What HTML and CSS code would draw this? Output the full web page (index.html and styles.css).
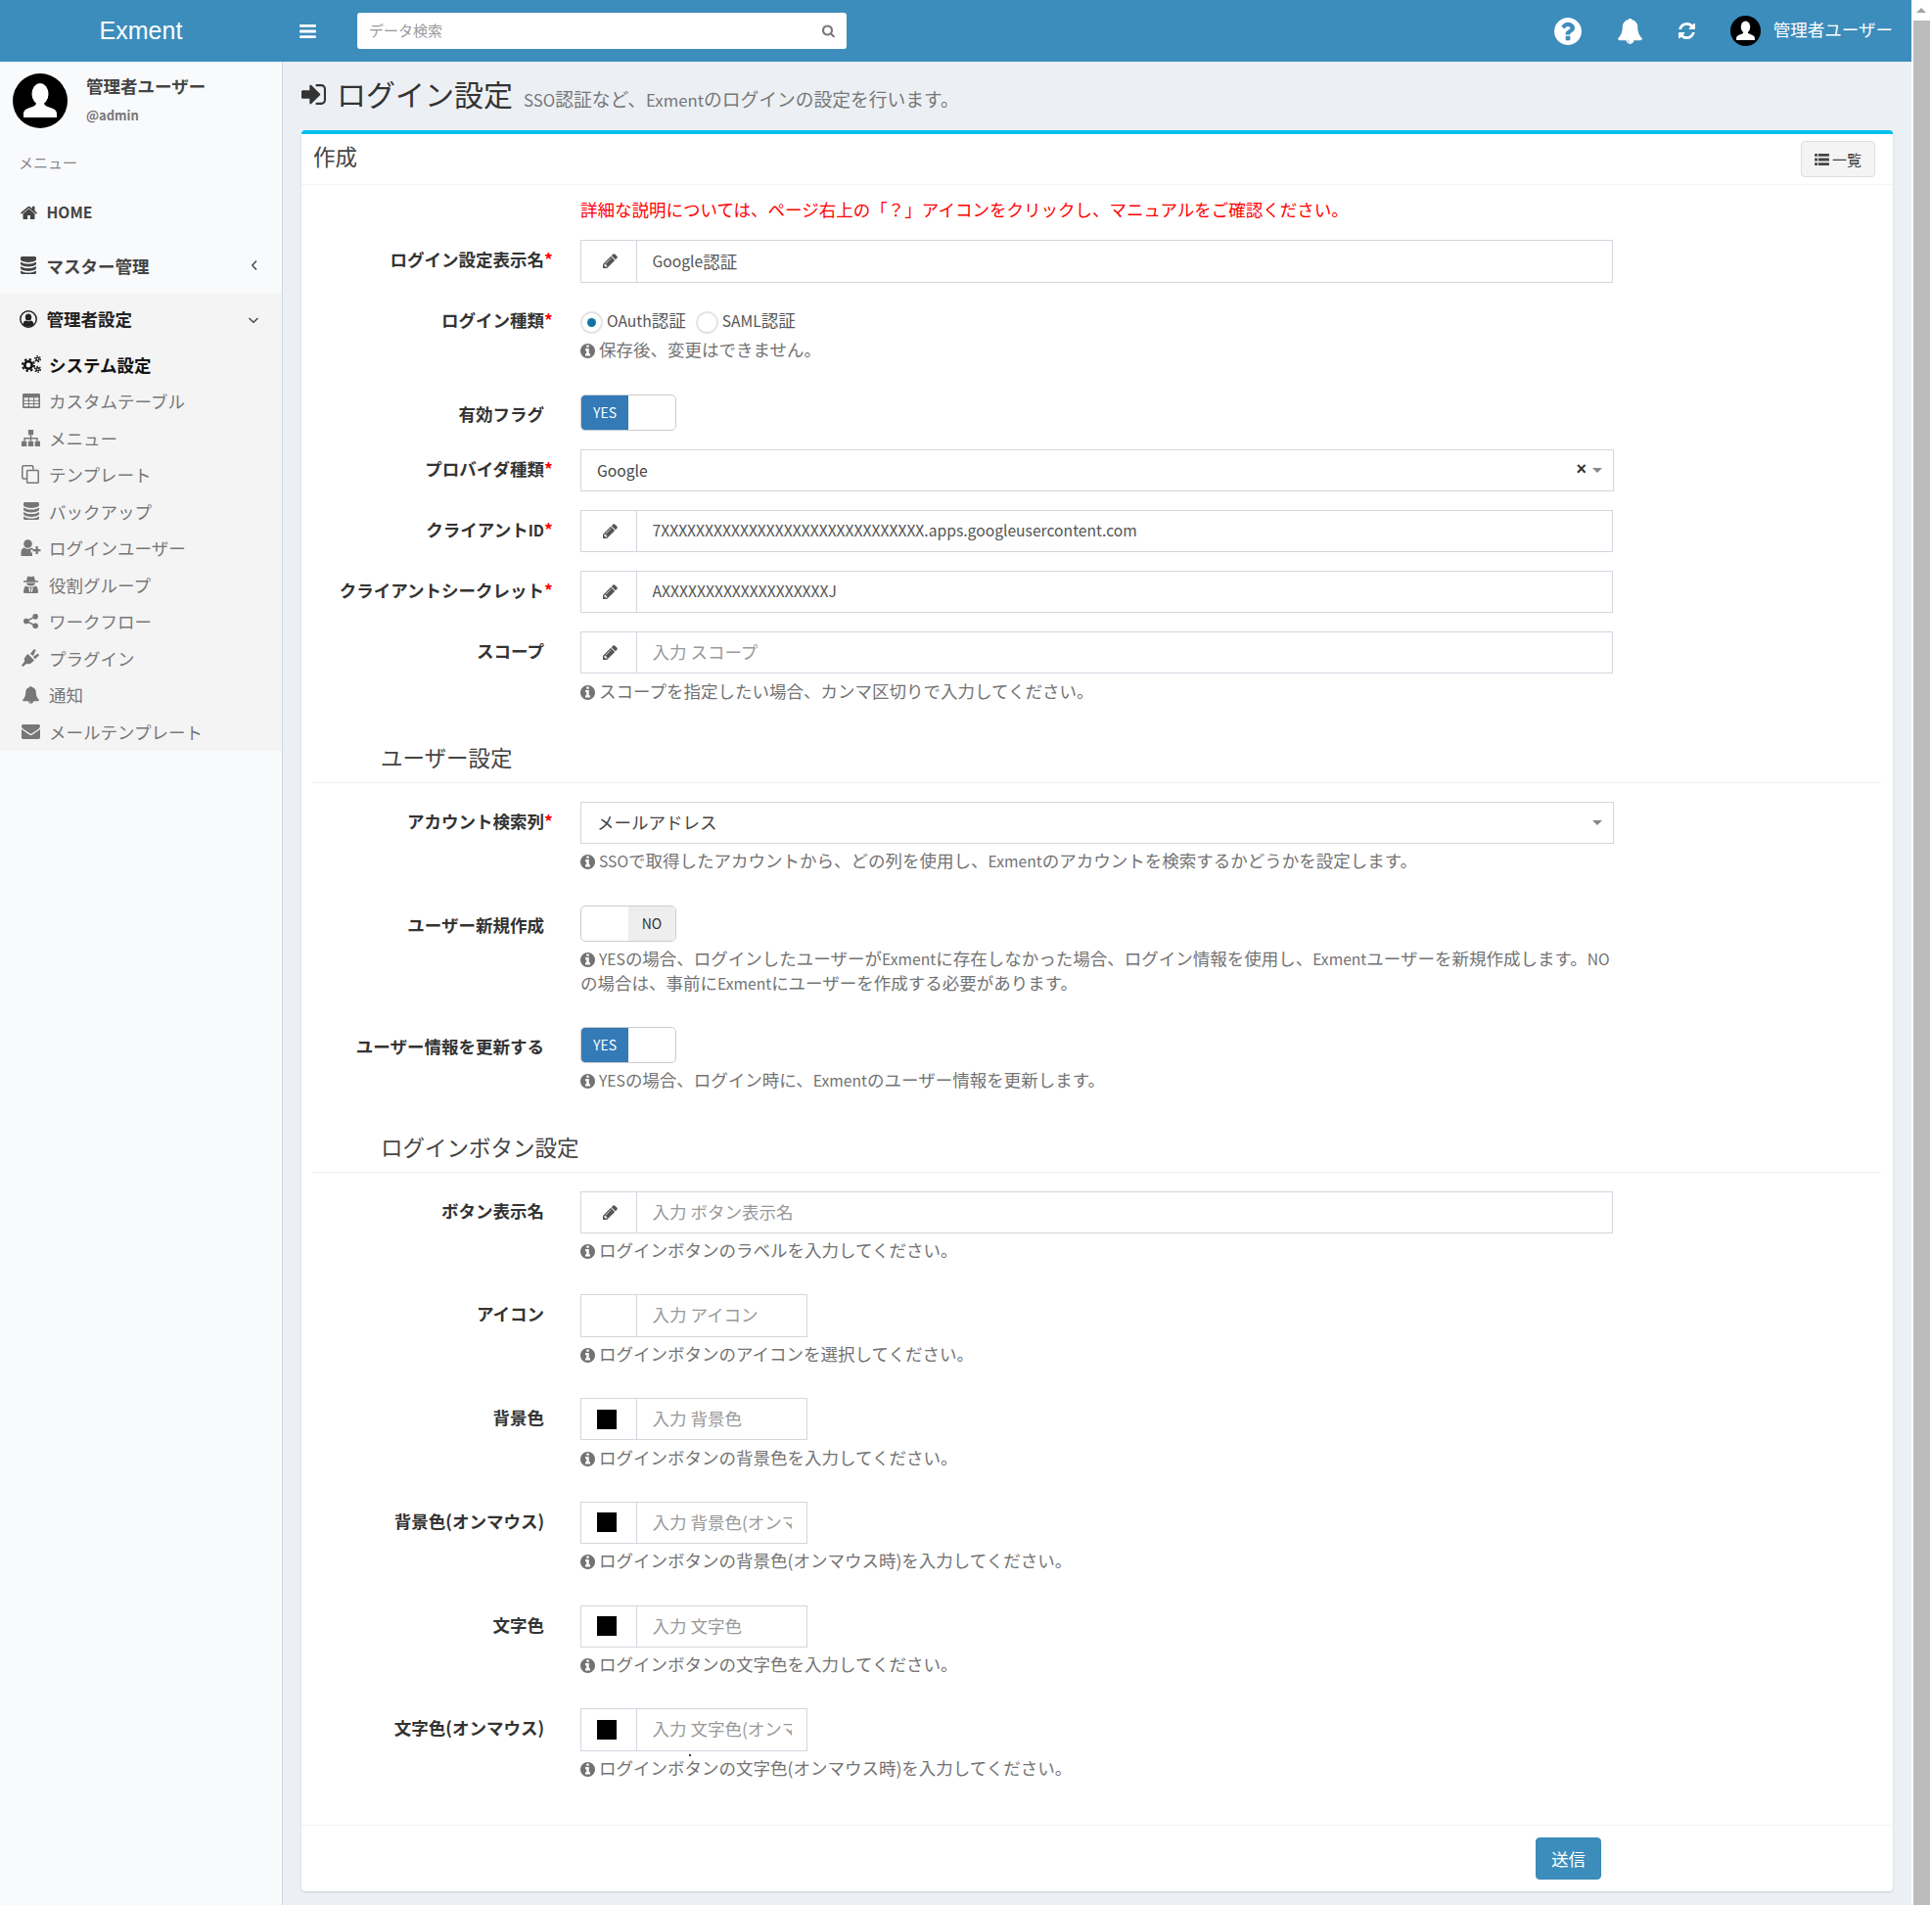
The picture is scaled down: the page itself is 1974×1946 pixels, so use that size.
FILE: index.html
```html
<!DOCTYPE html>
<html lang="ja">
<head>
    <meta charset="UTF-8">
    <title>ログイン設定</title>
    <link rel="stylesheet" href="styles.css">
</head>
<body>
<svg class="defs" width="0" height="0">
    <symbol id="i-bars" viewBox="128 256 1536 1280"><path d="M1664 1344v128q0 26-19 45t-45 19h-1408q-26 0-45-19t-19-45v-128q0-26 19-45t45-19h1408q26 0 45 19t19 45zm0-512v128q0 26-19 45t-45 19h-1408q-26 0-45-19t-19-45v-128q0-26 19-45t45-19h1408q26 0 45 19t19 45zm0-512v128q0 26-19 45t-45 19h-1408q-26 0-45-19t-19-45v-128q0-26 19-45t45-19h1408q26 0 45 19t19 45z"/></symbol>
    <symbol id="i-search" viewBox="64 64 1664 1664"><path d="M1216 832q0-185-131.5-316.5t-316.5-131.5-316.5 131.5-131.5 316.5 131.5 316.5 316.5 131.5 316.5-131.5 131.5-316.5zm512 832q0 52-38 90t-90 38q-54 0-90-38l-343-342q-179 124-399 124-143 0-273.5-55.5t-225-150-150-225-55.5-273.5 55.5-273.5 150-225 225-150 273.5-55.5 273.5 55.5 225 150 150 225 55.5 273.5q0 220-124 399l343 343q37 37 37 90z"/></symbol>
    <symbol id="i-question" viewBox="128 128 1536 1536"><path d="M1024 1376v-192q0-14-9-23t-23-9h-192q-14 0-23 9t-9 23v192q0 14 9 23t23 9h192q14 0 23-9t9-23zm256-672q0-88-55.5-163t-138.5-116-170-41q-243 0-371 213-15 24 8 42l132 100q7 6 19 6 16 0 25-12 53-68 86-92 34-24 86-24 48 0 85.5 26t37.5 59q0 38-20 61t-68 45q-63 28-115.5 86.5t-52.5 125.5v36q0 14 9 23t23 9h192q14 0 23-9t9-23q0-19 21.5-49.5t54.5-49.5q32-18 49-28.5t46-35 44.5-48 28-60.5 12.5-81zm384 192q0 209-103 385.5t-279.5 279.5-385.5 103-385.5-103-279.5-279.5-103-385.5 103-385.5 279.5-279.5 385.5-103 385.5 103 279.5 279.5 103 385.5z"/></symbol>
    <symbol id="i-info" viewBox="128 128 1536 1536"><path d="M1152 1376v-160q0-14-9-23t-23-9h-96v-512q0-14-9-23t-23-9h-320q-14 0-23 9t-9 23v160q0 14 9 23t23 9h96v320h-96q-14 0-23 9t-9 23v160q0 14 9 23t23 9h448q14 0 23-9t9-23zm-128-896v-160q0-14-9-23t-23-9h-192q-14 0-23 9t-9 23v160q0 14 9 23t23 9h192q14 0 23-9t9-23zm640 416q0 209-103 385.5t-279.5 279.5-385.5 103-385.5-103-279.5-279.5-103-385.5 103-385.5 279.5-279.5 385.5-103 385.5 103 279.5 279.5 103 385.5z"/></symbol>
    <symbol id="i-bell" viewBox="64 64 1664 1728"><path d="M912 1696q0-16-16-16-59 0-101.5-42.5t-42.5-101.5q0-16-16-16t-16 16q0 73 51.5 124.5t124.5 51.5q16 0 16-16zm816-288q0 52-38 90t-90 38h-448q0 106-75 181t-181 75-181-75-75-181h-448q-52 0-90-38t-38-90q50-42 91-88t85-119.5 74.5-158.5 50-206 19.5-260q0-152 117-282.5t307-158.5q-8-19-8-39 0-40 28-68t68-28 68 28 28 68q0 20-8 39 190 28 307 158.5t117 282.5q0 139 19.5 260t50 206 74.5 158.5 85 119.5 91 88z"/></symbol>
    <symbol id="i-refresh" viewBox="128 128 1536 1536"><path d="M1639 1056q0 5-1 7-64 268-268 434.5t-478 166.5q-146 0-282.5-55t-243.5-157l-129 129q-19 19-45 19t-45-19-19-45v-448q0-26 19-45t45-19h448q26 0 45 19t19 45-19 45l-137 137q71 66 161 102t187 36q134 0 250-65t186-179q11-17 53-117 8-23 30-23h192q13 0 22.5 9.5t9.5 22.5zm25-800v448q0 26-19 45t-45 19h-448q-26 0-45-19t-19-45 19-45l138-138q-148-137-349-137-134 0-250 65t-186 179q-11 17-53 117-8 23-30 23h-199q-13 0-22.5-9.5t-9.5-22.5v-7q65-268 270-434.5t480-166.5q146 0 284 55.5t245 156.5l130-129q19-19 45-19t45 19 19 45z"/></symbol>
    <symbol id="i-pencil" viewBox="128 128 1536 1536"><path d="M491 1536l91-91-235-235-91 91v107h128v128h107zm523-928q0-22-22-22-10 0-17 7l-542 542q-7 7-7 17 0 22 22 22 10 0 17-7l542-542q7-7 7-17zm-54-192l416 416-832 832h-416v-416zm683 96q0 53-37 90l-166 166-416-416 166-165q36-38 90-38 53 0 91 38l235 234q37 39 37 91z"/></symbol>
    <symbol id="i-home" viewBox="96 192 1600 1344"><path d="M1472 992v480q0 26-19 45t-45 19h-384v-384h-256v384h-384q-26 0-45-19t-19-45v-480q0-1 .5-3t.5-3l575-474 575 474q1 2 1 6zm223-69l-62 74q-8 9-21 11h-3q-13 0-21-7l-692-577-692 577q-12 8-24 7-13-2-21-11l-62-74q-8-10-7-23.5t11-21.5l719-599q32-26 76-26t76 26l244 204v-195q0-14 9-23t23-9h192q14 0 23 9t9 23v408l219 182q10 8 11 21.5t-7 23.5z"/></symbol>
    <symbol id="i-database" viewBox="128 128 1536 1536" preserveAspectRatio="none"><path d="M896 768q237 0 443-43t325-127v170q0 69-103 128t-280 93.5-385 34.5-385-34.5-280-93.5-103-128v-170q119 84 325 127t443 43zm0 768q237 0 443-43t325-127v170q0 69-103 128t-280 93.5-385 34.5-385-34.5-280-93.5-103-128v-170q119 84 325 127t443 43zm0-384q237 0 443-43t325-127v170q0 69-103 128t-280 93.5-385 34.5-385-34.5-280-93.5-103-128v-170q119 84 325 127t443 43zm0-1152q208 0 385 34.5t280 93.5 103 128v128q0 69-103 128t-280 93.5-385 34.5-385-34.5-280-93.5-103-128v-128q0-69 103-128t280-93.5 385-34.5z"/></symbol>
    <symbol id="i-signin" viewBox="128 256 1536 1280"><path d="M1312 896q0 26-19 45l-544 544q-19 19-45 19t-45-19-19-45v-288h-448q-26 0-45-19t-19-45v-384q0-26 19-45t45-19h448v-288q0-26 19-45t45-19 45 19l544 544q19 19 19 45zm352-352v704q0 119-84.5 203.5t-203.5 84.5h-320q-13 0-22.5-9.5t-9.5-22.5q0-4-1-20t-.5-26.5 3-23.5 10-19.5 20.5-6.5h320q66 0 113-47t47-113v-704q0-66-47-113t-113-47h-312l-11.5-1-11.5-3-8-5.5-7-9-2-13.5q0-4-1-20t-.5-26.5 3-23.5 10-19.5 20.5-6.5h320q119 0 203.5 84.5t84.5 203.5z"/></symbol>
    <symbol id="i-envelope" viewBox="0 256 1792 1408"><path d="M1792 710v794q0 66-47 113t-113 47h-1472q-66 0-113-47t-47-113v-794q44 49 101 87 362 246 497 345 57 42 92.5 65.5t94.5 48 110 24.5h2q51 0 110-24.5t94.5-48 92.5-65.5q170-123 498-345 57-39 100-87zm0-294q0 79-49 151t-122 123q-376 261-468 325-10 7-42.5 30.5t-54 38-52 32.5-57.5 27-50 9h-2q-23 0-50-9t-57.5-27-52-32.5-54-38-42.5-30.5q-91-64-262-182.5t-205-142.5q-62-42-117-115.5t-55-136.5q0-78 41.5-130t118.5-52h1472q65 0 112.5 47t47.5 113z"/></symbol>
    <symbol id="i-list" viewBox="0 0 16 13"><path d="M0 0h3v3H0zM4 0h12v3H4zM0 5h3v3H0zM4 5h12v3H4zM0 10h3v3H0zM4 10h12v3H4z"/></symbol>
    <symbol id="i-cogs" viewBox="0 0 20 18"><circle cx="7" cy="10" r="3.7" fill="none" stroke="currentColor" stroke-width="2.6"/><circle cx="7" cy="10" r="6" fill="none" stroke="currentColor" stroke-width="2" stroke-dasharray="2.4 2.3"/><circle cx="16.5" cy="3.7" r="1.6" fill="none" stroke="currentColor" stroke-width="1.4"/><circle cx="16.5" cy="3.7" r="3" fill="none" stroke="currentColor" stroke-width="1.2" stroke-dasharray="1.5 1.65"/><circle cx="16.5" cy="14.3" r="1.6" fill="none" stroke="currentColor" stroke-width="1.4"/><circle cx="16.5" cy="14.3" r="3" fill="none" stroke="currentColor" stroke-width="1.2" stroke-dasharray="1.5 1.65"/></symbol>
    <symbol id="i-table" viewBox="0 0 17 14"><path fill-rule="evenodd" d="M1 0h15a1 1 0 0 1 1 1v12a1 1 0 0 1-1 1H1a1 1 0 0 1-1-1V1a1 1 0 0 1 1-1zm.5 4v2.2h4V4zm5 0v2.2h4V4zm5 0v2.2h4V4zm-10 3.200v2.200h4V7.200zm5 0v2.200h4V7.200zm5 0v2.200h4V7.200zm-10 3.200v2.100h4v-2.100zm5 0v2.100h4v-2.100zm5 0v2.100h4v-2.100z"/></symbol>
    <symbol id="i-sitemap" viewBox="0 0 18 16"><path d="M6.500 0h5v5h-5zM0 11h5v5H0zM6.500 11h5v5h-5zM13 11h5v5h-5z"/><path d="M8.300 5h1.400v2.600h6.100V11h-1.400V9H9.700v2H8.300V9H3.600v2H2.200V7.600h6.100z"/></symbol>
    <symbol id="i-copy" viewBox="0 0 18 19"><path fill="none" stroke="currentColor" stroke-width="1.500" d="M5 14H2q-1.200 0-1.200-1.200V2Q.8.800 2 .8h8.600q1.200 0 1.200 1.200v2.800"/><rect x="5.600" y="5.400" width="11.600" height="12.800" rx=".8" fill="none" stroke="currentColor" stroke-width="1.500"/></symbol>
    <symbol id="i-userplus" viewBox="0 0 20 17"><circle cx="7" cy="4.500" r="4.300"/><path d="M0 17v-3.500Q0 9 3.500 8.500q3.500 2.500 7 0 2 .3 2.600 2H10v3h1.500V17z"/><path d="M15 7h2.300v3H20v2.300h-2.700V15H15v-2.700h-3V10h3z"/></symbol>
    <symbol id="i-secret" viewBox="0 0 15 18"><path d="M4.300.5q3.200 1.500 6.400 0L12 5.300h3v1.400H0V5.300h3z"/><path d="M3 7.500h9q-.2 3-4.500 3T3 7.500z"/><path fill-rule="evenodd" d="M2 10.500q5.500 2.500 11 0 2 2 2 6.300 0 1.200-1.200 1.200H1.200Q0 18 0 16.800q0-4.300 2-6.300zM5.200 12.500l1 4.500h.8v-4.500zM8 12.500V17h.8l1-4.500z"/></symbol>
    <symbol id="i-share" viewBox="0 0 16 16"><circle cx="3" cy="8" r="3"/><circle cx="13" cy="3" r="3"/><circle cx="13" cy="13" r="3"/><path d="M3 8l10-5M3 8l10 5" stroke="currentColor" stroke-width="1.600"/></symbol>
    <symbol id="i-plug" viewBox="0 0 18 18"><path d="M3.200 12.500q-1.300-2.700.8-4.800L6.500 5l6.500 6.500-2.700 2.500q-2.100 2.100-4.800.8L1.300 18 0 16.700z"/><path d="M8.800 5l3.700-4.600q1.700-.8 2 .9L12 7zM11.800 8l4.700-3.300q1.500.2 1.200 1.800L14 10.200z"/></symbol>
    <symbol id="i-usercircle" viewBox="0 0 18 18"><circle cx="9" cy="9" r="8.200" fill="none" stroke="currentColor" stroke-width="1.500"/><ellipse cx="9" cy="7" rx="3.200" ry="3.600"/><path d="M3.500 15q0-3.800 2.800-4.500 2.700 1.300 5.400 0 2.800.7 2.800 4.500-5.500 3.500-11 0z"/></symbol>
    <symbol id="i-avatar" viewBox="0 0 56 56"><circle cx="28" cy="28" r="28" fill="#000"/><ellipse cx="28" cy="21" rx="8.500" ry="11" fill="#fff"/><path fill="#fff" d="M11 45v-4q0-4 5-5.500 5-1.500 7-3 1-1 1-3h8q0 2 1 3 2 1.500 7 3 5 1.500 5 5.500v4z"/></symbol>
</svg>

<div class="window">
    <header class="topbar">
        <div class="logo">Exment</div>
        <svg class="ico ico-bars"><use href="#i-bars"/></svg>
        <div class="search">
            <input class="search-input" type="text" placeholder="データ検索">
            <svg class="ico ico-search"><use href="#i-search"/></svg>
        </div>
        <div class="top-right">
            <svg class="ico ico-help"><use href="#i-question"/></svg>
            <svg class="ico ico-bell"><use href="#i-bell"/></svg>
            <svg class="ico ico-refresh"><use href="#i-refresh"/></svg>
            <div class="top-user">
                <svg class="top-avatar"><use href="#i-avatar"/></svg>
                <span class="top-name">管理者ユーザー</span>
            </div>
        </div>
    </header>

    <div class="wrapper">
        <aside class="sidebar">
            <div class="user-panel">
                <svg class="user-avatar"><use href="#i-avatar"/></svg>
                <div class="user-info">
                    <div class="user-name">管理者ユーザー</div>
                    <div class="user-id"><span class="lt">@admin</span></div>
                </div>
            </div>
            <div class="menu-header">メニュー</div>
            <a class="nav-link">
                <span class="nav-slot"><svg class="ico ico-home"><use href="#i-home"/></svg></span><span class="lt">HOME</span>
            </a>
            <a class="nav-link nav-link-tall">
                <span class="nav-slot"><svg class="ico ico-db"><use href="#i-database"/></svg></span>マスター管理
                <svg class="nav-angle" viewBox="0 0 8 12"><path d="M6 1.500L1.800 6 6 10.500"/></svg>
            </a>
            <div class="nav-open">
                <a class="nav-link nav-link-dark">
                    <span class="nav-slot"><svg class="ico ico-usercircle"><use href="#i-usercircle"/></svg></span>管理者設定
                    <svg class="nav-angle nav-angle-down" viewBox="0 0 12 8"><path d="M1.500 2L6 6.200 10.500 2"/></svg>
                </a>
                <a class="sub-link sub-link-active"><span class="sub-slot"><svg class="ico ico-cogs"><use href="#i-cogs"/></svg></span>システム設定</a>
                <a class="sub-link"><span class="sub-slot"><svg class="ico ico-table"><use href="#i-table"/></svg></span>カスタムテーブル</a>
                <a class="sub-link"><span class="sub-slot"><svg class="ico ico-sitemap"><use href="#i-sitemap"/></svg></span>メニュー</a>
                <a class="sub-link"><span class="sub-slot"><svg class="ico ico-copy"><use href="#i-copy"/></svg></span>テンプレート</a>
                <a class="sub-link"><span class="sub-slot"><svg class="ico ico-db"><use href="#i-database"/></svg></span>バックアップ</a>
                <a class="sub-link"><span class="sub-slot"><svg class="ico ico-userplus"><use href="#i-userplus"/></svg></span>ログインユーザー</a>
                <a class="sub-link"><span class="sub-slot"><svg class="ico ico-secret"><use href="#i-secret"/></svg></span>役割グループ</a>
                <a class="sub-link"><span class="sub-slot"><svg class="ico ico-share"><use href="#i-share"/></svg></span>ワークフロー</a>
                <a class="sub-link"><span class="sub-slot"><svg class="ico ico-plug"><use href="#i-plug"/></svg></span>プラグイン</a>
                <a class="sub-link"><span class="sub-slot"><svg class="ico ico-subbell"><use href="#i-bell"/></svg></span>通知</a>
                <a class="sub-link"><span class="sub-slot"><svg class="ico ico-mail"><use href="#i-envelope"/></svg></span>メールテンプレート</a>
            </div>
        </aside>

        <main class="content">
            <div class="content-header">
                <svg class="ico ico-title"><use href="#i-signin"/></svg>
                <h1 class="page-title">ログイン設定</h1>
                <small class="page-sub"><span class="lt">SSO</span>認証など、<span class="lt">Exment</span>のログインの設定を行います。</small>
            </div>

            <section class="box">
                <div class="box-header">
                    <h3 class="box-title">作成</h3>
                    <a class="btn-list"><svg class="ico ico-list"><use href="#i-list"/></svg>一覧</a>
                </div>

                <form class="box-body">
                    <div class="form-group">
                        <div></div>
                        <div class="note-red">詳細な説明については、ページ右上の「？」アイコンをクリックし、マニュアルをご確認ください。</div>
                    </div>

                    <div class="form-group">
                        <label class="form-label required">ログイン設定表示名</label>
                        <div class="input-group">
                            <span class="addon"><svg class="ico ico-pencil"><use href="#i-pencil"/></svg></span>
                            <div class="form-input form-value"><span class="lt">Google</span>認証</div>
                        </div>
                    </div>

                    <div class="form-group form-group-radio">
                        <label class="form-label required">ログイン種類</label>
                        <div>
                            <div class="radios">
                                <span class="radio radio-on"></span><span class="radio-text"><span class="lt">OAuth</span>認証</span>
                                <span class="radio"></span><span class="radio-text"><span class="lt">SAML</span>認証</span>
                            </div>
                            <p class="help"><svg class="ico ico-info"><use href="#i-info"/></svg>保存後、変更はできません。</p>
                        </div>
                    </div>

                    <div class="form-group">
                        <label class="form-label">有効フラグ</label>
                        <div class="toggle"><span class="toggle-yes">YES</span></div>
                    </div>

                    <div class="form-group">
                        <label class="form-label required">プロバイダ種類</label>
                        <div class="select-box">
                            <span class="select-text"><span class="lt">Google</span></span>
                            <span class="select-clear">×</span>
                            <span class="select-arrow"></span>
                        </div>
                    </div>

                    <div class="form-group">
                        <label class="form-label required">クライアント<span class="lt">ID</span></label>
                        <div class="input-group">
                            <span class="addon"><svg class="ico ico-pencil"><use href="#i-pencil"/></svg></span>
                            <div class="form-input form-value"><span class="lt">7XXXXXXXXXXXXXXXXXXXXXXXXXXXXXX.apps.googleusercontent.com</span></div>
                        </div>
                    </div>

                    <div class="form-group">
                        <label class="form-label required">クライアントシークレット</label>
                        <div class="input-group">
                            <span class="addon"><svg class="ico ico-pencil"><use href="#i-pencil"/></svg></span>
                            <div class="form-input form-value"><span class="lt">AXXXXXXXXXXXXXXXXXXXJ</span></div>
                        </div>
                    </div>

                    <div class="form-group">
                        <label class="form-label">スコープ</label>
                        <div>
                            <div class="input-group">
                                <span class="addon"><svg class="ico ico-pencil"><use href="#i-pencil"/></svg></span>
                                <input class="form-input" type="text" placeholder="入力 スコープ">
                            </div>
                            <p class="help"><svg class="ico ico-info"><use href="#i-info"/></svg>スコープを指定したい場合、カンマ区切りで入力してください。</p>
                        </div>
                    </div>

                    <h4 class="section-title">ユーザー設定</h4>

                    <div class="form-group">
                        <label class="form-label required">アカウント検索列</label>
                        <div>
                            <div class="select-box">
                                <span class="select-text">メールアドレス</span>
                                <span class="select-arrow"></span>
                            </div>
                            <p class="help"><svg class="ico ico-info"><use href="#i-info"/></svg><span class="lt">SSO</span>で取得したアカウントから、どの列を使用し、<span class="lt">Exment</span>のアカウントを検索するかどうかを設定します。</p>
                        </div>
                    </div>

                    <div class="form-group">
                        <label class="form-label">ユーザー新規作成</label>
                        <div>
                            <div class="toggle toggle-off"><span class="toggle-no">NO</span></div>
                            <p class="help"><svg class="ico ico-info"><use href="#i-info"/></svg><span class="lt">YES</span>の場合、ログインしたユーザーが<span class="lt">Exment</span>に存在しなかった場合、ログイン情報を使用し、<span class="lt">Exment</span>ユーザーを新規作成します。<span class="lt">NO</span>の場合は、事前に<span class="lt">Exment</span>にユーザーを作成する必要があります。</p>
                        </div>
                    </div>

                    <div class="form-group">
                        <label class="form-label">ユーザー情報を更新する</label>
                        <div>
                            <div class="toggle"><span class="toggle-yes">YES</span></div>
                            <p class="help"><svg class="ico ico-info"><use href="#i-info"/></svg><span class="lt">YES</span>の場合、ログイン時に、<span class="lt">Exment</span>のユーザー情報を更新します。</p>
                        </div>
                    </div>

                    <h4 class="section-title">ログインボタン設定</h4>

                    <div class="form-group">
                        <label class="form-label">ボタン表示名</label>
                        <div>
                            <div class="input-group">
                                <span class="addon"><svg class="ico ico-pencil"><use href="#i-pencil"/></svg></span>
                                <input class="form-input" type="text" placeholder="入力 ボタン表示名">
                            </div>
                            <p class="help"><svg class="ico ico-info"><use href="#i-info"/></svg>ログインボタンのラベルを入力してください。</p>
                        </div>
                    </div>

                    <div class="form-group">
                        <label class="form-label">アイコン</label>
                        <div>
                            <div class="input-group input-group-small">
                                <span class="addon"></span>
                                <input class="form-input" type="text" placeholder="入力 アイコン">
                            </div>
                            <p class="help"><svg class="ico ico-info"><use href="#i-info"/></svg>ログインボタンのアイコンを選択してください。</p>
                        </div>
                    </div>

                    <div class="form-group">
                        <label class="form-label">背景色</label>
                        <div>
                            <div class="input-group input-group-small">
                                <span class="addon"><i class="swatch"></i></span>
                                <input class="form-input" type="text" placeholder="入力 背景色">
                            </div>
                            <p class="help"><svg class="ico ico-info"><use href="#i-info"/></svg>ログインボタンの背景色を入力してください。</p>
                        </div>
                    </div>

                    <div class="form-group">
                        <label class="form-label">背景色(オンマウス)</label>
                        <div>
                            <div class="input-group input-group-small">
                                <span class="addon"><i class="swatch"></i></span>
                                <input class="form-input" type="text" placeholder="入力 背景色(オンマウス時)">
                            </div>
                            <p class="help"><svg class="ico ico-info"><use href="#i-info"/></svg>ログインボタンの背景色(オンマウス時)を入力してください。</p>
                        </div>
                    </div>

                    <div class="form-group">
                        <label class="form-label">文字色</label>
                        <div>
                            <div class="input-group input-group-small">
                                <span class="addon"><i class="swatch"></i></span>
                                <input class="form-input" type="text" placeholder="入力 文字色">
                            </div>
                            <p class="help"><svg class="ico ico-info"><use href="#i-info"/></svg>ログインボタンの文字色を入力してください。</p>
                        </div>
                    </div>

                    <div class="form-group">
                        <label class="form-label">文字色(オンマウス)</label>
                        <div>
                            <div class="input-group input-group-small">
                                <span class="addon"><i class="swatch"></i></span>
                                <input class="form-input" type="text" placeholder="入力 文字色(オンマウス時)">
                            </div>
                            <p class="help help-dot"><svg class="ico ico-info"><use href="#i-info"/></svg>ログインボタンの文字色(オンマウス時)を入力してください。</p>
                        </div>
                    </div>
                </form>

                <div class="box-footer">
                    <button class="btn-submit" type="button">送信</button>
                </div>
            </section>
        </main>
    </div>
</div>

<div class="scrollbar">
    <span class="scroll-arrow"></span>
    <span class="scroll-thumb"></span>
</div>
</body>
</html>
```

FILE: styles.css
```css
* {
    box-sizing: border-box;
    margin: 0;
    padding: 0;
}

html, body {
    height: 1946px;
    overflow: hidden;
}

body {
    display: flex;
    background-color: #fff;
    color: #333;
    font-family: "Noto Sans CJK JP", "Noto Sans", sans-serif;
    font-size: 17.5px;
    line-height: 25px;
}

.defs {
    position: absolute;
}

/* latin runs are narrower than the CJK font's own latin */
.lt {
    font-size: 0.895em;
    line-height: 1;
}

.ico {
    display: block;
    fill: currentColor;
    flex: none;
}

.window {
    width: 1953px;
    display: flex;
    flex-direction: column;
}

/* top bar */
.topbar {
    height: 63px;
    flex: none;
    display: flex;
    align-items: center;
    background-color: #3c8dbc;
    color: #fff;
}

.logo {
    width: 288px;
    text-align: center;
    font-family: "Liberation Sans", sans-serif;
    font-size: 25px;
}

.ico-bars {
    width: 17px;
    height: 14px;
    margin-left: 18px;
}

.search {
    position: relative;
    width: 500px;
    height: 37px;
    margin-left: 42px;
}

.search-input {
    width: 100%;
    height: 100%;
    border: none;
    border-radius: 3px;
    padding: 0 12px 2px;
    font-family: inherit;
    font-size: 15px;
}

.search-input::placeholder {
    color: #999;
}

.ico-search {
    position: absolute;
    top: 12px;
    right: 12px;
    width: 13px;
    height: 13px;
    color: #777;
}

.top-right {
    margin-left: auto;
    padding-right: 19px;
    display: flex;
    align-items: center;
}

.ico-help {
    width: 28px;
    height: 28px;
}

.ico-bell {
    width: 25px;
    height: 26px;
    margin-left: 37px;
}

.ico-refresh {
    width: 17px;
    height: 17px;
    margin-left: 37px;
}

.top-user {
    display: flex;
    align-items: center;
    margin-left: 36px;
    gap: 13px;
}

.top-avatar {
    width: 31px;
    height: 31px;
}

.top-name {
    padding-bottom: 4px;
}

/* sidebar */
.wrapper {
    flex: 1;
    display: flex;
    background-color: #ecf0f5;
}

.sidebar {
    width: 289px;
    flex: none;
    background-color: #f9fafc;
    border-right: 1px solid #d2d6de;
}

.user-panel {
    display: flex;
    height: 81px;
    padding: 12px 0 0 13px;
}

.user-avatar {
    width: 56px;
    height: 56px;
}

.user-info {
    margin-left: 19px;
}

.user-name {
    font-weight: 700;
    color: #444;
}

.user-id {
    font-size: 14.5px;
    font-weight: 700;
    color: #777;
    margin-top: 4px;
}

.menu-header {
    height: 45.25px;
    padding: 0 0 3px 19px;
    display: flex;
    align-items: center;
    font-size: 15px;
    color: #848484;
}

.nav-link {
    position: relative;
    display: flex;
    align-items: center;
    height: 55px;
    padding-left: 21px;
    font-weight: 700;
    color: #444;
}

.nav-link-tall {
    height: 55.25px;
    padding-bottom: 1px;
}

.nav-link-dark {
    height: 53.75px;
    padding-bottom: 1px;
    color: #222;
}

.nav-slot {
    width: 26.5px;
}

.ico-home {
    width: 17px;
    height: 14px;
}

.ico-db {
    width: 16px;
    height: 18px;
}

.ico-usercircle {
    width: 18px;
    height: 18px;
    margin-left: -1px;
}

.nav-angle {
    position: absolute;
    right: 24px;
    top: 21px;
    width: 8px;
    height: 12px;
    fill: none;
    stroke: #444;
    stroke-width: 1.4;
}

.nav-angle-down {
    width: 12px;
    height: 8px;
    right: 23px;
    top: 23px;
}

.nav-open {
    background-color: #f4f4f5;
    padding-bottom: 1.25px;
}

.sub-link {
    display: flex;
    align-items: center;
    height: 37.5px;
    padding-left: 22px;
    color: #777;
}

.sub-link-active {
    color: #111;
    font-weight: 700;
}

.sub-slot {
    width: 28px;
}

.sub-slot .ico-db {
    margin-left: 2px;
}

.ico-cogs {
    width: 20px;
    height: 18px;
}

.ico-table {
    width: 18px;
    height: 15px;
    margin-left: 1px;
}

.ico-sitemap {
    width: 19px;
    height: 17px;
}

.ico-copy {
    width: 18px;
    height: 19px;
}

.ico-userplus {
    width: 21px;
    height: 17px;
    margin-left: -1px;
}

.ico-secret {
    width: 15px;
    height: 18px;
    margin-left: 2px;
}

.ico-share {
    width: 15px;
    height: 15px;
    margin-left: 2px;
}

.ico-plug {
    width: 18px;
    height: 18px;
}

.ico-subbell {
    width: 17px;
    height: 18px;
    margin-left: 1px;
}

.ico-mail {
    width: 19px;
    height: 15px;
}

/* content */
.content {
    flex: 1;
    min-width: 0;
    padding: 0 19px;
}

.content-header {
    height: 70px;
    padding-bottom: 4px;
    display: flex;
    align-items: center;
    color: #333;
}

.ico-title {
    width: 25px;
    height: 21px;
    margin-right: 11px;
}

.page-title {
    font-size: 30px;
    font-weight: 400;
    line-height: 40px;
    padding-bottom: 2px;
}

.page-sub {
    font-size: 18.75px;
    color: #777;
    margin-left: 11px;
    padding-top: 8px;
}

.box {
    background-color: #fff;
    border-top: 4px solid #00c0ef;
    border-radius: 4px;
    box-shadow: 0 1px 2px rgba(0, 0, 0, 0.15);
}

.box-header {
    height: 52px;
    display: flex;
    align-items: center;
    justify-content: space-between;
    padding: 0 18px 0 12px;
    border-bottom: 1px solid #f4f4f4;
}

.box-title {
    font-size: 22.5px;
    font-weight: 400;
    color: #444;
    padding-bottom: 7px;
}

.btn-list {
    display: flex;
    align-items: center;
    justify-content: center;
    gap: 3px;
    width: 76px;
    height: 37px;
    background-color: #f4f4f4;
    border: 1px solid #ddd;
    border-radius: 4px;
    font-size: 15px;
    color: #444;
}

.ico-list {
    width: 15px;
    height: 12px;
}

.box-body {
    padding: 12.5px 12px;
}

.form-group {
    display: grid;
    grid-template-columns: 245px 1056px;
    column-gap: 28px;
    margin-bottom: 18.75px;
}

.form-group-radio {
    margin-bottom: 20.25px;
}

.form-label {
    text-align: right;
    font-weight: 700;
    padding-top: 7px;
    padding-right: 9px;
}

.required {
    padding-right: 0;
}

.required::after {
    content: "*";
    color: #f00;
    display: inline-block;
    width: 9px;
    text-align: left;
}

.note-red {
    color: #f00;
    margin: -1px 0 1px;
}

.input-group {
    display: flex;
    width: 1055px;
    height: 43.25px;
}

.input-group-small {
    width: 232px;
}

.addon {
    width: 58px;
    flex: none;
    display: flex;
    align-items: center;
    justify-content: center;
    border: 1px solid #d2d6de;
    color: #555;
}

.ico-pencil {
    width: 15px;
    height: 15px;
    margin-left: 2px;
}

.swatch {
    display: block;
    width: 20px;
    height: 20px;
    background-color: #000;
    margin-right: 5px;
}

.form-input {
    flex: 1;
    min-width: 0;
    border: 1px solid #d2d6de;
    border-left: none;
    padding: 0 15.5px 2px;
    font-family: inherit;
    font-size: 17.5px;
    color: #555;
    background-color: #fff;
}

.form-value {
    display: flex;
    align-items: center;
    white-space: pre;
    padding-bottom: 1px;
}

.form-input::placeholder {
    color: #999;
}

.radios {
    display: flex;
    align-items: flex-start;
    height: 32px;
    padding-top: 7px;
    color: #555;
}

.radio {
    width: 23px;
    height: 23px;
    margin-top: 3.5px;
    border: 2px solid #e3e5ea;
    border-radius: 50%;
    display: flex;
    align-items: center;
    justify-content: center;
}

.radio-on::after {
    content: "";
    width: 9px;
    height: 9px;
    border-radius: 50%;
    background-color: #0e74a8;
}

.radio-text {
    margin: 0 10px 0 4px;
}

.help {
    position: relative;
    margin: 4.25px 0 14.5px;
    color: #737373;
    width: 1055px;
}

.help .ico-info {
    display: inline-block;
    width: 15px;
    height: 15px;
    margin-right: 4px;
    vertical-align: -2px;
}

/* the small speck above the last help line */
.help-dot::before {
    content: "";
    position: absolute;
    top: -1px;
    left: 111px;
    width: 2px;
    height: 2px;
    background-color: #333;
}

.toggle {
    display: flex;
    width: 98px;
    height: 37px;
    border: 1px solid #ccc;
    border-radius: 5px;
    overflow: hidden;
}

.toggle-off {
    justify-content: flex-end;
}

.toggle-yes, .toggle-no {
    display: flex;
    align-items: center;
    justify-content: center;
    width: 48px;
    font-size: 14px;
}

.toggle-yes {
    background-color: #337ab7;
    color: #fff;
}

.toggle-no {
    background-color: #eee;
    color: #333;
}

.select-box {
    display: flex;
    align-items: center;
    width: 1056px;
    height: 43.25px;
    padding: 0 11px 2px 16px;
    border: 1px solid #d2d6de;
    color: #444;
}

.select-text {
    margin-right: auto;
}

.select-clear {
    font-family: "Liberation Sans", sans-serif;
    font-size: 18px;
    font-weight: 700;
    color: #333;
    margin-right: 6px;
}

.select-arrow {
    width: 0;
    height: 0;
    margin-top: 2px;
    border-left: 5px solid transparent;
    border-right: 5px solid transparent;
    border-top: 5px solid #888;
}

.section-title {
    font-size: 22.5px;
    font-weight: 400;
    line-height: 27px;
    color: #444;
    padding: 9px 0 12px 69px;
    margin-bottom: 19px;
    border-bottom: 1px solid #f0f0f0;
}

.box-footer {
    display: flex;
    justify-content: flex-end;
    padding: 12.5px 298px 12.5px 0;
    border-top: 1px solid #f4f4f4;
}

.btn-submit {
    width: 67px;
    height: 42.5px;
    background-color: #3c8dbc;
    border: 1px solid #3a89b6;
    border-radius: 4px;
    color: #fff;
    font-family: inherit;
    font-size: 17.5px;
}

/* scrollbar drawn by hand, the page itself does not scroll here */
.scrollbar {
    width: 21px;
    position: relative;
    background-color: #fff;
}

.scroll-arrow {
    position: absolute;
    top: 8px;
    left: 5px;
    border-left: 5px solid transparent;
    border-right: 5px solid transparent;
    border-bottom: 5px solid #a3a3a3;
}

.scroll-thumb {
    position: absolute;
    top: 21px;
    bottom: 0;
    left: 2px;
    width: 17px;
    background-color: #bcbcbc;
}
```
